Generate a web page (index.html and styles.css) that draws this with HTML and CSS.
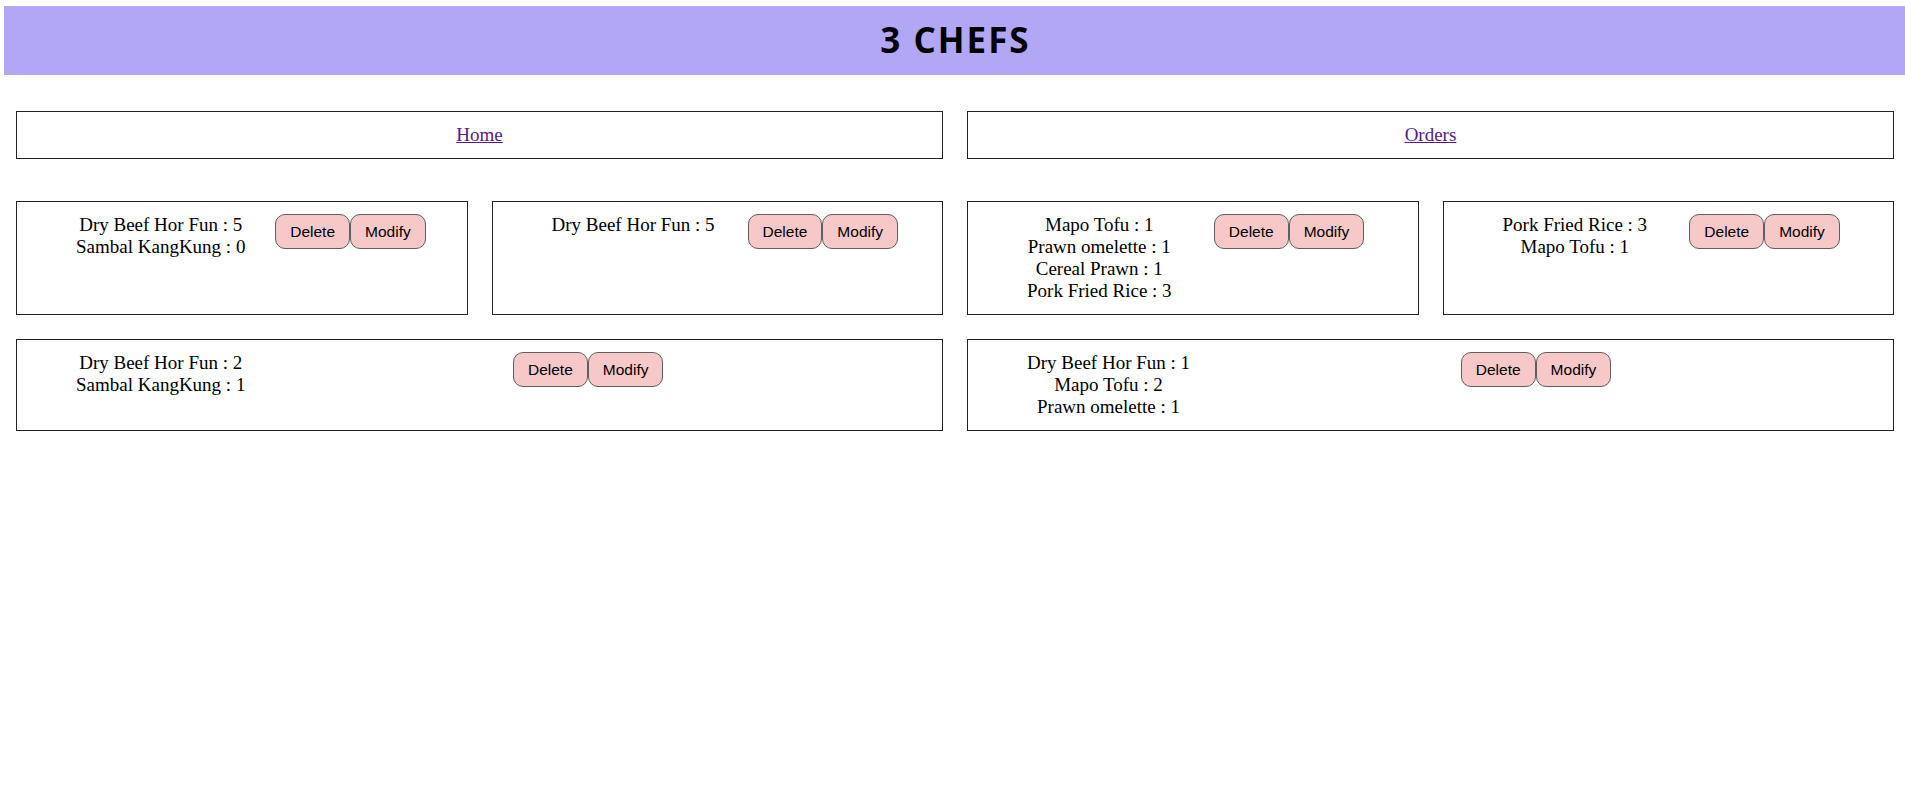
FILE: index.html
```html
<!DOCTYPE html>
<html lang="en">
<head>
<meta charset="utf-8">
<title>3 CHEFS</title>
<link rel="stylesheet" href="styles.css">
</head>
<body>
<header class="site-header">
  <h1 class="site-title">3 CHEFS</h1>
</header>
<main class="page">
  <nav class="nav-grid">
    <div class="nav-card"><a class="nav-link" href="#">Home</a></div>
    <div class="nav-card"><a class="nav-link" href="#">Orders</a></div>
  </nav>
  <section class="orders">
    <article class="order-card">
      <div class="order-items">
        <div>Dry Beef Hor Fun : 5</div>
        <div>Sambal KangKung : 0</div>
      </div>
      <div class="order-actions">
        <div class="btn-group"><button class="btn">Delete</button><button class="btn">Modify</button></div>
      </div>
    </article>
    <article class="order-card">
      <div class="order-items">
        <div>Dry Beef Hor Fun : 5</div>
      </div>
      <div class="order-actions">
        <div class="btn-group"><button class="btn">Delete</button><button class="btn">Modify</button></div>
      </div>
    </article>
    <article class="order-card">
      <div class="order-items">
        <div>Mapo Tofu : 1</div>
        <div>Prawn omelette : 1</div>
        <div>Cereal Prawn : 1</div>
        <div>Pork Fried Rice : 3</div>
      </div>
      <div class="order-actions">
        <div class="btn-group"><button class="btn">Delete</button><button class="btn">Modify</button></div>
      </div>
    </article>
    <article class="order-card">
      <div class="order-items">
        <div>Pork Fried Rice : 3</div>
        <div>Mapo Tofu : 1</div>
      </div>
      <div class="order-actions">
        <div class="btn-group"><button class="btn">Delete</button><button class="btn">Modify</button></div>
      </div>
    </article>
    <article class="order-card order-card--wide">
      <div class="order-items">
        <div>Dry Beef Hor Fun : 2</div>
        <div>Sambal KangKung : 1</div>
      </div>
      <div class="order-actions">
        <div class="btn-group"><button class="btn">Delete</button><button class="btn">Modify</button></div>
      </div>
    </article>
    <article class="order-card order-card--wide">
      <div class="order-items">
        <div>Dry Beef Hor Fun : 1</div>
        <div>Mapo Tofu : 2</div>
        <div>Prawn omelette : 1</div>
      </div>
      <div class="order-actions">
        <div class="btn-group"><button class="btn">Delete</button><button class="btn">Modify</button></div>
      </div>
    </article>
  </section>
</main>
</body>
</html>
```

FILE: styles.css
```css
html, body {
  margin: 0;
  padding: 0;
  background: #ffffff;
}

body {
  font-family: "Liberation Serif", "Times New Roman", serif;
  font-size: 19px;
  color: #000000;
}

.site-header {
  margin: 6px 0 0 4px;
  height: 69px;
  box-sizing: border-box;
  padding: 0 0 2px 2px;
  background: #b2a7f5;
  display: flex;
  align-items: center;
  justify-content: center;
}

.site-title {
  margin: 0;
  font-family: "Open Sans", "Liberation Sans", sans-serif;
  font-weight: 700;
  font-size: 35px;
  letter-spacing: 2px;
  color: #000000;
}

.page {
  padding: 0 11px 0 16px;
}

.nav-grid {
  margin-top: 36px;
  display: grid;
  grid-template-columns: 1fr 1fr;
  column-gap: 24px;
}

.nav-card {
  border: 1px solid #222222;
  padding: 12px;
  text-align: center;
}

.nav-link {
  color: #551a8b;
  text-decoration: underline;
}

.orders {
  margin-top: 42px;
  display: grid;
  grid-template-columns: repeat(4, 1fr);
  gap: 24px;
}

.order-card {
  border: 1px solid #222222;
  padding: 12px 11px 12px 59px;
  display: flex;
  align-items: flex-start;
}

.order-card--wide {
  grid-column: span 2;
}

.order-items {
  text-align: center;
  white-space: nowrap;
}

.order-actions {
  flex: 1;
  display: flex;
  justify-content: center;
}

.btn-group {
  display: flex;
}

.btn {
  font-family: "Liberation Sans", Arial, sans-serif;
  font-size: 15.5px;
  color: #000000;
  background: #f7c8c8;
  border: 1px solid #5f5f5f;
  border-radius: 10px;
  padding: 7.5px 14px;
  margin: 0;
  line-height: normal;
}
```
